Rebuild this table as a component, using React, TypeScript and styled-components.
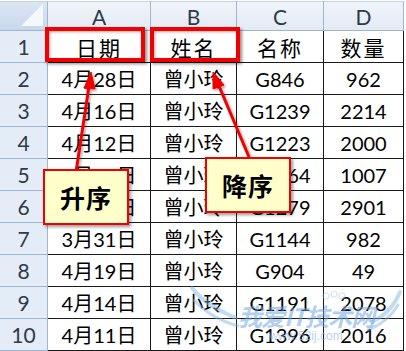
import { Fragment } from 'react'
import styled, { createGlobalStyle } from 'styled-components'

const GlobalStyle = createGlobalStyle`
  html, body {
    margin: 0;
    padding: 0;
    background: #ffffff;
  }
`

const Page = styled.div`
  position: relative;
  width: 406px;
  height: 351px;
  overflow: hidden;
  background: #ffffff;
  padding-top: 1px;
  box-sizing: border-box;
`

const Sheet = styled.div`
  display: grid;
  grid-template-columns: 48px 103px 86px 87px 80px;
  grid-template-rows: 30px repeat(10, 32px);
  font-family: Lato, "Noto Sans CJK SC", sans-serif;
  font-size: 20px;
`

const Corner = styled.div`
  position: relative;
  background: linear-gradient(180deg, #dbe5f3 0%, #c9d8ec 100%);
  border-right: 1px solid #9eb6ce;
  border-bottom: 1px solid #9eb6ce;
  border-top: 1px solid #c5d3e6;

  &::after {
    content: '';
    position: absolute;
    right: 4px;
    bottom: 4px;
    width: 0;
    height: 0;
    border-left: 22px solid transparent;
    border-bottom: 22px solid #f4f7fb;
  }
`

const ColHead = styled.div`
  display: flex;
  align-items: center;
  justify-content: center;
  background: linear-gradient(180deg, #f1f5fa 0%, #e3eaf4 100%);
  border-right: 1px solid #9eb6ce;
  border-bottom: 1px solid #9eb6ce;
  border-top: 1px solid #c5d3e6;
  color: #2e3a48;
  font-size: 21px;
`

const RowHead = styled.div`
  display: flex;
  align-items: center;
  justify-content: center;
  background: #e4ecf7;
  border-right: 1px solid #9eb6ce;
  border-bottom: 1px solid #9eb6ce;
  color: #2e3a48;
  font-size: 21px;
`

const Cell = styled.div<{ $title?: boolean }>`
  display: flex;
  align-items: center;
  justify-content: center;
  background: #ffffff;
  border-right: 1px solid #1a1a1a;
  border-bottom: 1px solid #1a1a1a;
  color: #000000;
  white-space: nowrap;
  font-size: ${(p) => (p.$title ? '21px' : '20px')};
  letter-spacing: ${(p) => (p.$title ? '2px' : '0')};
`

const Highlight = styled.div<{ $left: number; $width: number }>`
  position: absolute;
  top: 27px;
  left: ${(p) => p.$left}px;
  width: ${(p) => p.$width}px;
  height: 35px;
  box-sizing: border-box;
  border: 4px solid #f00000;
  box-shadow: 2px 2px 3px rgba(0, 0, 0, 0.45), inset 1px 1px 3px rgba(0, 0, 0, 0.35);
`

const Callout = styled.div<{ $left: number; $top: number }>`
  position: absolute;
  left: ${(p) => p.$left}px;
  top: ${(p) => p.$top}px;
  width: 86px;
  height: 56px;
  box-sizing: border-box;
  display: flex;
  align-items: center;
  justify-content: center;
  background: #ffffcc;
  border: 2px solid #f00000;
  box-shadow: 2px 2px 3px rgba(0, 0, 0, 0.4);
  font-family: "Noto Sans CJK SC", sans-serif;
  font-weight: 700;
  font-size: 25px;
  color: #000000;
  letter-spacing: 1px;
`

const Overlay = styled.svg`
  position: absolute;
  left: 0;
  top: 0;
  pointer-events: none;
`

const Watermark = styled.div`
  position: absolute;
  left: 238px;
  top: 302px;
  display: flex;
  flex-direction: column;
  align-items: center;
  color: rgba(110, 165, 225, 0.55);
  pointer-events: none;
`

const MarkTitle = styled.div`
  font-family: "Noto Sans CJK SC", sans-serif;
  font-weight: 700;
  font-style: italic;
  font-size: 24px;
  line-height: 28px;
  letter-spacing: -1px;
`

const MarkUrl = styled.div`
  font-family: "Liberation Sans", sans-serif;
  font-size: 12px;
  line-height: 12px;
  color: rgba(140, 185, 230, 0.65);
`

const columns = ['A', 'B', 'C', 'D']

const header = ['日期', '姓名', '名称', '数量']

const rows = [
  ['4月28日', '曾小玲', 'G846', '962'],
  ['4月16日', '曾小玲', 'G1239', '2214'],
  ['4月12日', '曾小玲', 'G1223', '2000'],
  ['4月10日', '曾小玲', 'G1164', '1007'],
  ['4月20日', '曾小玲', 'G1279', '2901'],
  ['3月31日', '曾小玲', 'G1144', '982'],
  ['4月19日', '曾小玲', 'G904', '49'],
  ['4月14日', '曾小玲', 'G1191', '2078'],
  ['4月11日', '曾小玲', 'G1396', '2016'],
]

export default function App() {
  return (
    <Page>
      <GlobalStyle />
      <Sheet>
        <Corner />
        {columns.map((c) => (
          <ColHead key={c}>{c}</ColHead>
        ))}
        <RowHead>1</RowHead>
        {header.map((h) => (
          <Cell key={h} $title>
            {h}
          </Cell>
        ))}
        {rows.map((row, i) => (
          <Fragment key={i}>
            <RowHead>{i + 2}</RowHead>
            {row.map((v, j) => (
              <Cell key={j}>{v}</Cell>
            ))}
          </Fragment>
        ))}
      </Sheet>

      <Highlight $left={45} $width={100} />
      <Highlight $left={150} $width={90} />

      {/* watermark wings */}
      <Overlay width="406" height="351" viewBox="0 0 406 351">
        <g fill="none" stroke="rgba(120,175,230,0.45)" strokeLinecap="round">
          <path d="M192 288 Q205 305 236 318" strokeWidth="4" />
          <path d="M194 300 Q210 318 238 326" strokeWidth="3" />
          <path d="M400 292 Q392 312 372 322" strokeWidth="4" />
          <path d="M398 305 Q388 322 368 330" strokeWidth="3" />
        </g>
        <g fill="none" stroke="rgba(150,190,230,0.4)" strokeWidth="1.2">
          <circle cx="326" cy="296" r="3" />
          <circle cx="334" cy="294" r="3" />
          <circle cx="342" cy="296" r="3" />
        </g>
      </Overlay>

      <Watermark>
        <MarkTitle>我爱IT技术网</MarkTitle>
        <MarkUrl>www.52ij.com</MarkUrl>
      </Watermark>

      <Overlay width="406" height="351" viewBox="0 0 406 351">
        <defs>
          <filter id="sh" x="-20%" y="-20%" width="140%" height="140%">
            <feDropShadow dx="1.5" dy="1.5" stdDeviation="1" floodColor="#000" floodOpacity="0.35" />
          </filter>
        </defs>
        <g filter="url(#sh)" fill="#f00000" stroke="#f00000">
          <line x1="76" y1="172" x2="89" y2="86" strokeWidth="3" />
          <polygon points="91,72 84,88 95,89" strokeWidth="1" />
          <line x1="249" y1="157" x2="219" y2="86" strokeWidth="3" />
          <polygon points="213,72 213,89 224,85" strokeWidth="1" />
        </g>
      </Overlay>

      <Callout $left={43} $top={169}>升序</Callout>
      <Callout $left={205} $top={157}>降序</Callout>
    </Page>
  )
}
